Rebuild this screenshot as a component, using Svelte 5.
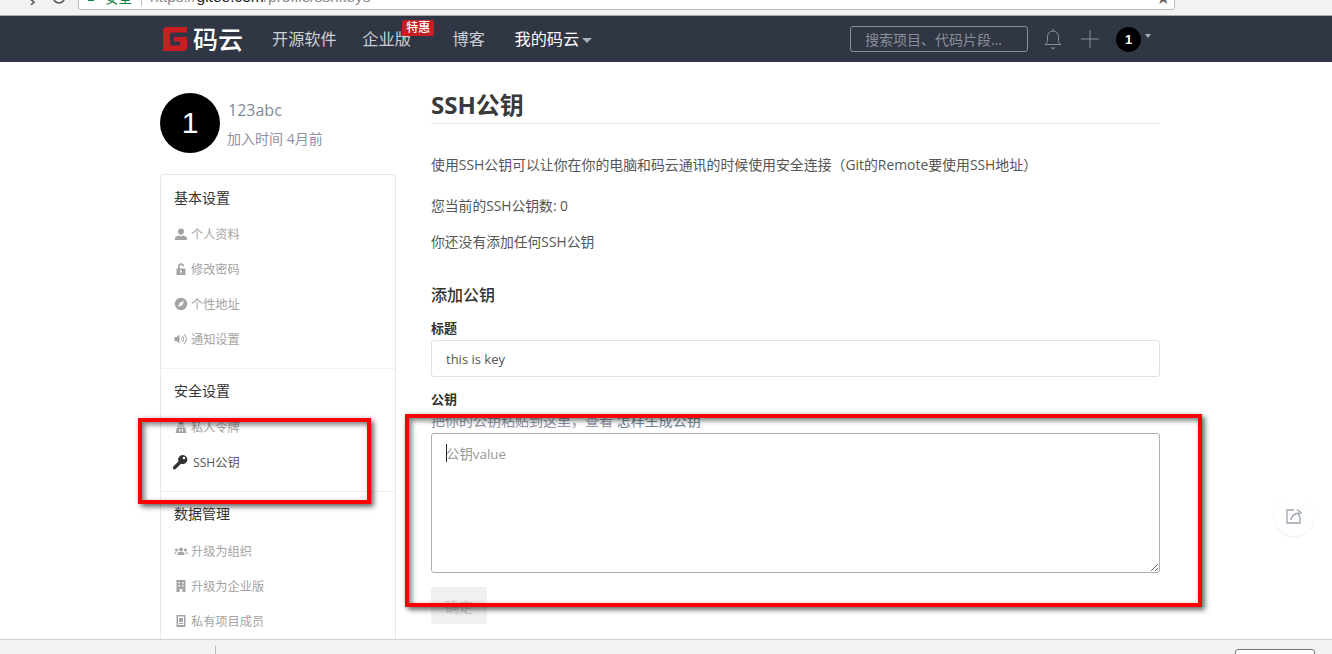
<script>
  const groups = [
    {
      title: "基本设置",
      items: [
        { label: "个人资料", icon: "user" },
        { label: "修改密码", icon: "lock" },
        { label: "个性地址", icon: "compass" },
        { label: "通知设置", icon: "volume" },
      ],
    },
    {
      title: "安全设置",
      items: [
        { label: "私人令牌", icon: "token" },
        { label: "SSH公钥", icon: "key", active: true },
      ],
    },
    {
      title: "数据管理",
      items: [
        { label: "升级为组织", icon: "users" },
        { label: "升级为企业版", icon: "building" },
        { label: "私有项目成员", icon: "member" },
      ],
    },
  ]

  const icons = {
    user: "M7 1.500a3 3 0 0 1 3 3c0 1.600-1.300 3.200-3 3.200S4 6.100 4 4.500a3 3 0 0 1 3-3zM1 13v-1.600c0-1.600 2.200-2.400 3.600-2.900.7.500 1.500.8 2.400.8s1.700-.3 2.400-.8c1.400.5 3.600 1.300 3.600 2.900V13z",
    lock: "M2.500 6.500H4V4.300a3 3 0 0 1 6 0H8.300a1.300 1.300 0 0 0-2.600 0v2.200h5.800V13h-9zM7 8.300a1 1 0 0 0-.5 1.900v1.300h1v-1.300A1 1 0 0 0 7 8.300z",
    compass: "M7 .8a6.200 6.200 0 1 1 0 12.400A6.200 6.200 0 0 1 7 .8zm3 3.200L5.700 5.700 4 10l4.300-1.700z",
    volume: "M.5 5h2l3-2.500v9l-3-2.500h-2zM7 5c1 .8 1 3.200 0 4zM8.500 3.500c2 1.500 2 5.500 0 7l-.6-.7c1.500-1.300 1.500-4.300 0-5.600zM10.500 2c3 2.300 3 7.700 0 10l-.6-.7c2.400-2 2.400-6.600 0-8.600z",
    token: "M5 1.500h4l.7 3H4.300zM3.500 5.500h7v1h-7zM3 7.500h8L12.500 13h-11zM5 9v2.500h1.200V9zm2.800 0v2.500H9V9z",
    key: "M9.500.8a4 4 0 1 1-1.600 7.700L3 13.400l-2-.1-.2-2L5.700 6.300A4 4 0 0 1 9.500.8zm1 1.700a1.100 1.100 0 1 0 0 2.200 1.100 1.100 0 0 0 0-2.200z",
    users: "M7 3.500a2 2 0 1 1 0 4 2 2 0 0 1 0-4zM2.500 4.500a1.500 1.500 0 1 1 0 3 1.500 1.500 0 0 1 0-3zm9 0a1.500 1.500 0 1 1 0 3 1.500 1.500 0 0 1 0-3zM3.500 11V9.500c0-1 1.300-1.500 3.500-1.500s3.500.5 3.500 1.500V11zM0 9.700c0-1 .8-1.500 2.700-1.500-.5.4-.8.900-.8 1.500H0zm14 0h-1.900c0-.6-.3-1.100-.8-1.500 1.900 0 2.700.5 2.700 1.500z",
    building: "M2.500 1h9v12H8.500v-3h-3v3h-3zM4.300 3v1.500h1.500V3zm3.900 0v1.500h1.500V3zM4.300 6v1.500h1.500V6zm3.900 0v1.500h1.500V6z",
    member: "M2.500 1h9v12h-9zM4 2.500V11h6V2.500zM5 4h4v4H5zM4.800 9h4.400v1H4.800z",
  }
</script>

<div class="page">
  <div class="browser">
    <div class="browser-nav">
      <svg class="back" width="8" height="6" viewBox="0 0 8 6"><path d="M1 0l4 3-3 3" fill="none" stroke="#555" stroke-width="1.500" /></svg>
      <svg class="reload" width="14" height="6" viewBox="0 0 14 6"><path d="M1.500 0a5.500 5.500 0 0 0 11 0" transform="translate(0 -2.500)" fill="none" stroke="#555" stroke-width="1.500" /></svg>
    </div>
    <div class="address">
      <i class="secure-icon"></i>
      <span class="secure">安全</span>
      <i class="address-sep"></i>
      <span class="url">https://<b>gitee.com</b>/profile/sshkeys</span>
      <span class="star">★</span>
    </div>
  </div>

  <header class="navbar">
    <div class="logo">
      <svg width="24" height="24" viewBox="0 0 24 24">
        <path fill="#c71d23" d="M4 0H24V5.500H9Q7 5.500 7 7.500V16.500Q7 18.500 9 18.500H17V14.500H11V10H24V20Q24 24 20 24H0V4Q0 0 4 0Z" />
      </svg>
      <span>码云</span>
    </div>
    <nav class="links">
      <a href="#top">开源软件</a>
      <a href="#top" class="badged">企业版<em>特惠</em></a>
      <a href="#top" class="blog">博客</a>
      <a href="#top" class="mine">我的码云<i class="caret"></i></a>
    </nav>
    <div class="tools">
      <input class="search" placeholder="搜索项目、代码片段..." />
      <svg class="bell" width="18" height="22" viewBox="0 0 18 22" fill="none" stroke="#8b8f99" stroke-width="1">
        <path d="M1 16.500h16c-1.500-1.200-2.500-2-2.500-4V8.500C14.500 5.300 12 3 9 3S3.500 5.300 3.500 8.500v4c0 2-1 2.800-2.500 4z" />
        <path d="M9 1v2" />
        <path d="M6.500 19.500h5L9 21.500z" fill="#8b8f99" stroke="none" />
      </svg>
      <svg class="plus" width="18" height="18" viewBox="0 0 18 18"><path d="M9 0v18M0 9h18" stroke="#8b8f99" stroke-width="1" /></svg>
      <span class="nav-avatar">1</span>
      <i class="caret small"></i>
    </div>
  </header>

  <div class="body">
    <div class="container">
      <aside class="sidebar">
        <div class="profile">
          <div class="avatar">1</div>
          <div class="who">
            <div class="name">123abc</div>
            <div class="joined">加入时间 4月前</div>
          </div>
        </div>
        <div class="menu">
          {#each groups as group}
            <section class="group">
              <h4>{group.title}</h4>
              {#each group.items as item}
                <a href="#top" class="item" class:active={item.active}>
                  <svg width="14" height="14" viewBox="0 0 14 14"><path d={icons[item.icon]} fill="currentColor" fill-rule="evenodd" /></svg>
                  <span>{item.label}</span>
                </a>
              {/each}
            </section>
          {/each}
        </div>
      </aside>

      <main class="content">
        <h2>SSH公钥</h2>
        <p class="intro">使用SSH公钥可以让你在你的电脑和码云通讯的时候使用安全连接（Git的Remote要使用SSH地址）</p>
        <p class="count">您当前的SSH公钥数: 0</p>
        <p class="none">你还没有添加任何SSH公钥</p>
        <h3>添加公钥</h3>
        <label for="key-title">标题</label>
        <input id="key-title" class="title-input" value="this is key" />
        <label for="key-value" class="key-label">公钥</label>
        <div class="hint">把你的公钥粘贴到这里，查看 <a href="#top">怎样生成公钥</a></div>
        <div class="area">
          <textarea id="key-value" placeholder="公钥value"></textarea>
          <i class="cursor"></i>
        </div>
        <button disabled>确定</button>
      </main>
    </div>

    <div class="share">
      <svg width="18" height="18" viewBox="0 0 18 18" fill="none" stroke="#9aa3ad" stroke-width="1.300">
        <path d="M9 3H2v13h13V9" />
        <path d="M6 13c.5-4 3-6.500 8-7" />
        <path d="M12 2.500l4 3-3 3.500" />
      </svg>
    </div>
  </div>

  <footer class="downloads">
    <i class="downloads-sep"></i>
    <span class="show-all"></span>
  </footer>

  <div class="mark mark-menu"></div>
  <div class="mark mark-form"></div>
</div>

<style>
  :global(body) {
    margin: 0;
    background: #fff;
  }

  .page {
    position: relative;
    height: 654px;
    display: flex;
    flex-direction: column;
    overflow: hidden;
    font-family: "Open Sans", "Noto Sans CJK SC", sans-serif;
    color: #444;
  }

  .browser {
    flex: none;
    height: 15px;
    display: flex;
    background: #f2f2f2;
    border-bottom: 1px solid #a9a9a9;
    overflow: hidden;
  }

  .browser-nav {
    width: 78px;
    position: relative;
    flex: none;
  }

  .back {
    position: absolute;
    left: 29px;
    top: -1px;
  }

  .reload {
    position: absolute;
    left: 52px;
    top: 0;
  }

  .address {
    width: 1097px;
    height: 26px;
    margin-top: -16px;
    box-sizing: border-box;
    display: flex;
    align-items: center;
    padding-left: 9px;
    background: #fff;
    border: 1px solid #bbb;
    border-radius: 3px;
    font-size: 13.500px;
    font-family: "Liberation Sans", "Noto Sans CJK SC", sans-serif;
    color: #8a8a8a;
  }

  .secure-icon {
    width: 6px;
    height: 8px;
    background: #0b8043;
    margin-right: 11px;
  }

  .secure {
    color: #0b8043;
  }

  .address-sep {
    width: 1px;
    height: 18px;
    background: #bbb;
    margin: 0 8px 0 9px;
  }

  .url {
    font-size: 15.500px;
  }

  .url b {
    font-weight: 400;
    color: #222;
  }

  .star {
    margin-left: auto;
    margin-right: 4px;
    color: #666;
  }

  .navbar {
    flex: none;
    height: 46px;
    display: flex;
    align-items: center;
    padding-left: 163px;
    padding-right: 181px;
    background: #303643;
  }

  .logo {
    display: flex;
    align-items: center;
    gap: 6px;
    width: 109px;
    flex: none;
    color: #fff;
    font-size: 25px;
    font-weight: 500;
  }

  .logo span {
    line-height: 24px;
  }

  .links {
    display: flex;
    align-items: center;
    gap: 25.600px;
    padding-bottom: 2px;
    font-size: 16.200px;
  }

  .links a {
    position: relative;
    color: #ccd0d6;
    text-decoration: none;
    white-space: nowrap;
  }

  .links .blog {
    margin-left: 16px;
  }

  .links .mine {
    margin-left: 4px;
    color: #fff;
  }

  .links em {
    position: absolute;
    left: 40px;
    top: -6px;
    padding: 0 4px;
    height: 16px;
    line-height: 16px;
    border-radius: 2px;
    background: #c71d23;
    color: #fff;
    font-size: 12px;
    font-style: normal;
    font-weight: 500;
  }

  .caret {
    display: inline-block;
    margin-left: 3px;
    vertical-align: middle;
    border-style: solid;
    border-width: 5px 5px 0;
    border-color: #a9acb3 transparent transparent;
  }

  .caret.small {
    margin-left: 4px;
    margin-top: -6px;
    border-width: 4px 3.500px 0;
  }

  .tools {
    margin-left: auto;
    display: flex;
    align-items: center;
  }

  .search {
    width: 178px;
    height: 26px;
    box-sizing: border-box;
    padding: 0 14px;
    background: transparent;
    border: 1px solid #8b8f99;
    border-radius: 3px;
    font-family: inherit;
    font-size: 14px;
    outline: none;
  }

  .search::placeholder {
    color: #8b8f99;
  }

  .bell {
    margin-left: 16px;
  }

  .plus {
    margin-left: 19px;
  }

  .nav-avatar {
    margin-left: 17px;
    width: 25px;
    height: 25px;
    border-radius: 50%;
    background: #000;
    color: #fff;
    font-family: "Liberation Sans", sans-serif;
    font-size: 13px;
    font-weight: 700;
    line-height: 25px;
    text-align: center;
  }

  .body {
    position: relative;
    flex: 1;
    min-height: 0;
    overflow: hidden;
  }

  .container {
    display: flex;
    gap: 35px;
    margin-left: 160px;
    width: 1000px;
  }

  .sidebar {
    width: 236px;
    flex: none;
    padding-top: 31px;
  }

  .profile {
    display: flex;
    gap: 7px;
    height: 60px;
  }

  .avatar {
    width: 60px;
    height: 60px;
    flex: none;
    border-radius: 50%;
    background: #000;
    color: #fff;
    font-size: 30px;
    line-height: 60px;
    text-align: center;
    font-family: "Liberation Sans", sans-serif;
  }

  .name {
    margin-top: 6px;
    margin-left: 1px;
    font-size: 16px;
    line-height: 22px;
    color: #7d8a99;
  }

  .joined {
    margin-top: 8px;
    font-size: 14px;
    line-height: 20px;
    color: #8c92a4;
  }

  .menu {
    margin-top: 21px;
    border: 1px solid #e3e9ed;
    border-radius: 4px;
    height: 600px;
    box-sizing: border-box;
  }

  .group {
    padding: 11px 13px 12px;
    border-bottom: 1px solid #eef0f2;
  }

  .group:last-child {
    border-bottom: 0;
  }

  .group:last-child h4 {
    margin-bottom: 7px;
  }

  .group + .group {
    padding-top: 10px;
  }

  h4 {
    margin: 0 0 6px;
    font-size: 14px;
    line-height: 24px;
    font-weight: 400;
    color: #333;
  }

  .item {
    display: flex;
    align-items: center;
    gap: 3px;
    height: 35px;
    color: #a3a3a3;
    font-size: 12.200px;
    text-decoration: none;
  }

  .item svg {
    flex: none;
  }

  .item.active {
    gap: 5px;
    color: #555;
  }

  .item.active svg {
    color: #333;
    width: 16px;
    height: 16px;
    margin-left: -2px;
  }

  .content {
    flex: 1;
    min-width: 0;
    padding-top: 26px;
  }

  h2 {
    margin: 0;
    height: 35px;
    line-height: 34px;
    font-size: 24px;
    font-weight: 700;
    color: #3a3a3a;
    border-bottom: 1px solid #e6e6e6;
  }

  p {
    margin: 0;
    font-size: 13.800px;
    line-height: 20px;
    color: #555;
  }

  .intro {
    margin-top: 31px;
    font-size: 13.900px;
  }

  .count {
    margin-top: 21px;
  }

  .none {
    margin-top: 16px;
  }

  h3 {
    margin: 31px 0 0;
    font-size: 16px;
    line-height: 24px;
    font-weight: 500;
    color: #333;
  }

  label {
    display: block;
    margin-top: 12px;
    font-size: 13px;
    line-height: 18px;
    font-weight: 700;
    color: #333;
  }

  .title-input {
    display: block;
    width: 100%;
    height: 37px;
    margin-top: 3px;
    box-sizing: border-box;
    padding: 0 14px;
    border: 1px solid #dce3e8;
    border-radius: 3px;
    font-family: inherit;
    font-size: 13px;
    color: #555;
    outline: none;
  }

  .key-label {
    margin-top: 13px;
  }

  .hint {
    margin-top: 4px;
    font-size: 14px;
    line-height: 18px;
    color: #8c92a4;
  }

  .hint a {
    color: #6f8597;
    text-decoration: none;
  }

  .area {
    position: relative;
    margin-top: 3px;
    height: 140px;
  }

  textarea {
    display: block;
    width: 100%;
    height: 140px;
    box-sizing: border-box;
    padding: 10px 14px;
    border: 1px solid #a9afb5;
    border-radius: 3px;
    font-family: inherit;
    font-size: 13.400px;
    line-height: 20px;
    outline: none;
  }

  textarea::placeholder {
    color: #999;
  }

  .cursor {
    position: absolute;
    left: 15px;
    top: 11px;
    width: 1px;
    height: 18px;
    background: #222;
  }

  button {
    display: block;
    width: 56px;
    height: 37px;
    margin-top: 14px;
    padding: 0;
    border: 0;
    border-radius: 3px;
    background: #f0f0f0;
    color: #ccc;
    font-family: inherit;
    font-size: 14px;
  }

  .share {
    position: absolute;
    left: 1274px;
    top: 434px;
    width: 40px;
    height: 40px;
    box-sizing: border-box;
    display: flex;
    align-items: center;
    justify-content: center;
    border-radius: 50%;
    background: #fff;
    box-shadow: 0 1px 2px rgba(0, 0, 0, 0.08);
  }

  .downloads {
    position: relative;
    flex: none;
    height: 14px;
    background: #f2f2f2;
    border-top: 1px solid #d0d0d0;
    overflow: hidden;
  }

  .downloads-sep {
    position: absolute;
    left: 215px;
    top: 6px;
    width: 1px;
    height: 10px;
    background: #bbb;
  }

  .show-all {
    position: absolute;
    left: 1235px;
    top: 9px;
    width: 80px;
    height: 20px;
    box-sizing: border-box;
    background: #fff;
    border: 1px solid #777;
    border-radius: 3px;
  }

  .mark {
    position: absolute;
    box-sizing: border-box;
    border: 4px solid #f00;
    box-shadow:
      3px 3px 5px rgba(0, 0, 0, 0.55),
      0 0 5px rgba(0, 0, 0, 0.15),
      inset 3px 3px 5px rgba(0, 0, 0, 0.45),
      inset 0 0 4px rgba(0, 0, 0, 0.12);
  }

  .mark-menu {
    left: 138px;
    top: 418px;
    width: 233px;
    height: 86px;
  }

  .mark-form {
    left: 405px;
    top: 414px;
    width: 797px;
    height: 193px;
  }
</style>
